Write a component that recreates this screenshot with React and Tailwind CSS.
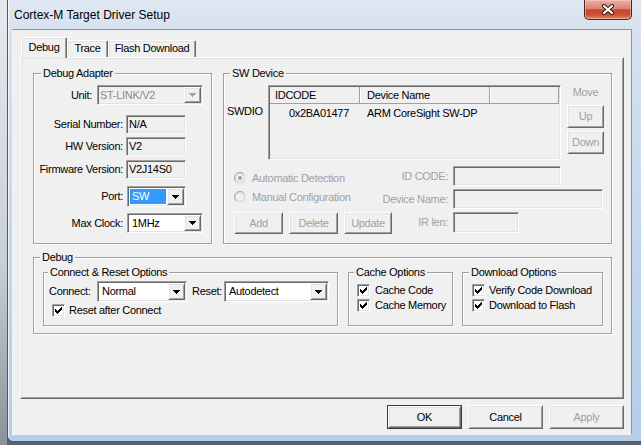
import React from "react";

const sunken =
  "border border-t-[#a0a0a0] border-l-[#a0a0a0] border-r-white border-b-white shadow-[inset_1px_1px_0_#696969,inset_-1px_-1px_0_#e3e3e3]";
const raised =
  "border border-t-white border-l-white border-r-[#696969] border-b-[#696969] shadow-[inset_1px_1px_0_#e3e3e3,inset_-1px_-1px_0_#a0a0a0]";
const GRAY = "text-[#a0a0a0]";

function Tri({ disabled }) {
  return (
    <svg width="7" height="4" viewBox="0 0 7 4">
      <path
        d="M0 0h7v1h-1v1h-1v1h-1v1h-1v-1h-1v-1h-1v-1h-1z"
        fill={disabled ? "#a0a0a0" : "#000"}
      />
    </svg>
  );
}

function ArrowBtn({ disabled }) {
  return (
    <div
      className={`w-[17px] h-full shrink-0 flex items-center justify-center bg-[#f0f0f0] ${raised}`}
    >
      <Tri disabled={disabled} />
    </div>
  );
}

function Combo({ className, value, disabled, selected, textPad }) {
  return (
    <div className={`flex p-[1px] ${sunken} ${disabled ? "bg-[#f0f0f0]" : "bg-white"} ${className}`}>
      <div className="flex-1 flex items-center min-w-0 p-[1px]">
        {selected ? (
          <div className="h-full w-full flex items-center bg-[#3399ff] text-white pl-[2px]">{value}</div>
        ) : (
          <span className={`${textPad} ${disabled ? "text-[#8a8a8a]" : ""}`}>{value}</span>
        )}
      </div>
      <ArrowBtn disabled={disabled} />
    </div>
  );
}

function Field({ className, value, bg }) {
  return (
    <div className={`flex items-center pl-[2px] ${sunken} ${bg || "bg-[#f0f0f0]"} ${className}`}>
      {value}
    </div>
  );
}

function Btn({ className, children, disabled, def }) {
  return (
    <div
      className={`flex items-center justify-center bg-[#f0f0f0] ${def ? "border border-[#3c3c3c] p-0" : ""} ${className}`}
    >
      <div
        className={`w-full h-full flex items-center justify-center ${raised} ${disabled ? GRAY : "text-black"}`}
      >
        {children}
      </div>
    </div>
  );
}

function Check() {
  return (
    <div
      className={`w-[13px] h-[13px] shrink-0 bg-white flex items-center justify-center ${sunken}`}
    >
      <svg width="7" height="7" viewBox="0 0 7 7">
        <path
          d="M0 2h1v3H0zM1 3h1v3H1zM2 4h1v3H2zM3 3h1v3H3zM4 2h1v3H4zM5 1h1v3H5zM6 0h1v3H6z"
          fill="#000"
        />
      </svg>
    </div>
  );
}

function Radio({ checked }) {
  return (
    <svg width="12" height="12" viewBox="0 0 12 12" className="shrink-0">
      <circle cx="6" cy="6" r="5.5" fill="#f0f0f0" stroke="#a0a0a0" />
      <path d="M9.89 2.11 A5.5 5.5 0 0 1 2.11 9.89" fill="none" stroke="#ffffff" />
      <circle cx="6" cy="6" r="4.5" fill="none" stroke="#d4d4d4" />
      {checked && <circle cx="6" cy="6" r="2" fill="#a0a0a0" />}
    </svg>
  );
}

function Group({ label, labelLeft, className, children }) {
  return (
    <div
      className={`relative border border-[#a0a0a0] shadow-[inset_1px_1px_0_#fff,1px_1px_0_#fff] ${className}`}
    >
      <span
        className={`absolute top-[-7px] ${labelLeft} px-[2px] bg-[#f0f0f0] leading-[13px] whitespace-nowrap`}
      >
        {label}
      </span>
      {children}
    </div>
  );
}

function Tab({ children, selected, className }) {
  return (
    <div
      className={`border-l border-t border-r border-l-white border-t-white border-r-[#696969] rounded-t-[2px] shadow-[inset_-1px_0_0_#a0a0a0,inset_1px_1px_0_#e3e3e3] text-center bg-[#f0f0f0] leading-[13px] ${
        selected ? "h-[21px] -mb-[1px] relative z-10 pt-[3px]" : "h-[17px] pt-[1px]"
      } ${className}`}
    >
      {children}
    </div>
  );
}

function RLabel({ children }) {
  return (
    <div className="w-[55px] flex justify-end">
      <span className="whitespace-nowrap shrink-0">{children}</span>
    </div>
  );
}

export default function App() {
  return (
    <div className="w-[641px] h-[445px] overflow-hidden flex bg-[#5b6168] font-['Liberation_Sans',Arial,sans-serif] text-[11px] leading-[13px] tracking-[-0.3px] text-black">
      {/* desktop strip */}
      <div className="w-[7px] h-full bg-[linear-gradient(180deg,#e6eaef_0%,#c9ced5_60%,#8c9299_100%)]" />
      {/* window */}
      <div className="flex-1 h-[442px] flex flex-col border-l border-b border-[#4c5a6a] rounded-bl-[6px] bg-[linear-gradient(180deg,#dfe8f2_0px,#d6e2ef_30px,#c5d8ee_220px,#b4cdea_100%)] shadow-[inset_1px_0_0_rgba(255,255,255,0.7)]">
        {/* title bar */}
        <div className="h-[29px] flex items-start shrink-0">
          <div className="pl-[6px] pt-[8px] text-[12px] leading-[15px] tracking-normal text-black">
            Cortex-M Target Driver Setup
          </div>
          <div className="ml-auto mr-[9px] w-[48px] h-[20px] rounded-b-[5px] border border-t-0 border-[#5a1f1a] bg-[linear-gradient(180deg,#eab0a3_0%,#dc8574_45%,#c74530_52%,#cd5238_78%,#e3895f_100%)] shadow-[inset_0_0_0_1px_rgba(255,220,210,0.45)] flex items-center justify-center">
            <svg width="14" height="11" viewBox="0 0 14 11">
              <path d="M3 2 L11 9 M11 2 L3 9" stroke="#3d1712" strokeWidth="4.2" strokeLinecap="round" />
              <path d="M3 2 L11 9 M11 2 L3 9" stroke="#ffffff" strokeWidth="2.2" strokeLinecap="round" />
            </svg>
          </div>
        </div>
        {/* client area */}
        <div className="ml-[4px] w-[620px] h-[406px] border border-t-[#8497ad] border-r-[#8497ad] border-l-[#eef3f8] border-b-[#eef3f8] bg-[#f0f0f0] flex flex-col shrink-0">
          {/* tabs */}
          <div className="mt-[7px] h-[20px] pl-[8px] flex items-end shrink-0">
            <Tab selected className="w-[46px]">Debug</Tab>
            <Tab className="w-[41px]">Trace</Tab>
            <Tab className="w-[88px]">Flash Download</Tab>
          </div>
          {/* panel */}
          <div className="ml-[7px] w-[604px] h-[342px] border border-t-white border-l-white border-r-[#696969] border-b-[#696969] shadow-[inset_1px_1px_0_#e3e3e3,inset_-1px_-1px_0_#a0a0a0] pl-[12px] pt-[15px] flex flex-col shrink-0">
            <div className="flex gap-[11px] h-[171px]">
              {/* Debug Adapter */}
              <Group label="Debug Adapter" labelLeft="left-[7px]" className="w-[179px] h-full flex flex-col">
                <div className="mt-[11px] h-[20px] flex items-center">
                  <span className="w-[58px] text-right">Unit:</span>
                  <Combo className="ml-[5px] w-[106px] h-[20px]" value="ST-LINK/V2" disabled textPad="pl-[0px]" />
                </div>
                <div className="mt-[10px] h-[19px] flex items-center">
                  <span className="w-[89px] text-right">Serial Number:</span>
                  <Field className="ml-[3px] w-[60px] h-[19px]" value="N/A" />
                </div>
                <div className="mt-[3px] h-[19px] flex items-center">
                  <span className="w-[89px] text-right">HW Version:</span>
                  <Field className="ml-[3px] w-[60px] h-[19px]" value="V2" />
                </div>
                <div className="mt-[4px] h-[19px] flex items-center">
                  <span className="w-[89px] text-right whitespace-nowrap">Firmware Version:</span>
                  <Field className="ml-[3px] w-[60px] h-[19px]" value="V2J14S0" />
                </div>
                <div className="mt-[7px] h-[21px] flex items-center">
                  <span className="w-[89px] text-right">Port:</span>
                  <Combo className="ml-[4px] w-[59px] h-[21px]" value="SW" selected />
                </div>
                <div className="mt-[6px] h-[20px] flex items-center">
                  <span className="w-[89px] text-right">Max Clock:</span>
                  <Combo className="ml-[4px] w-[76px] h-[20px]" value="1MHz" textPad="pl-[2px]" />
                </div>
              </Group>
              {/* SW Device */}
              <Group label="SW Device" labelLeft="left-[6px]" className="w-[389px] h-full flex flex-col">
                <div className="mt-[11px] h-[75px] flex">
                  <div className="w-[44px] pl-[3px] pt-[20px]">SWDIO</div>
                  <div className={`w-[293px] h-[75px] p-[1px] bg-[#f0f0f0] flex flex-col ${sunken}`}>
                    <div className="h-[17px] flex shrink-0">
                      <div className="w-[90px] h-full flex items-center pl-[5px] border-r border-b border-[#a0a0a0]">IDCODE</div>
                      <div className="w-[130px] h-full flex items-center pl-[7px] border-r border-b border-[#a0a0a0] shadow-[inset_1px_0_0_#fff]">Device Name</div>
                      <div className="flex-1 h-full border-r border-b border-[#a0a0a0] shadow-[inset_1px_0_0_#fff]" />
                    </div>
                    <div className="mt-[1px] h-[17px] flex items-center">
                      <div className="w-[90px] pl-[19px]">0x2BA01477</div>
                      <div className="pl-[7px] whitespace-nowrap">ARM CoreSight SW-DP</div>
                    </div>
                  </div>
                  <div className="ml-[6px] w-[37px] flex flex-col">
                    <div className={`text-center mt-[1px] ${GRAY}`}>Move</div>
                    <Btn className="mt-[6px] h-[23px]" disabled>Up</Btn>
                    <Btn className="mt-[3px] h-[23px]" disabled>Down</Btn>
                  </div>
                </div>
                <div className="mt-[6px] flex">
                  <div className="w-[169px] flex flex-col">
                    <div className={`mt-[5px] h-[14px] flex items-center pl-[10px] ${GRAY}`}>
                      <Radio checked />
                      <span className="ml-[6px] whitespace-nowrap">Automatic Detection</span>
                    </div>
                    <div className={`mt-[5px] h-[14px] flex items-center pl-[10px] ${GRAY}`}>
                      <Radio />
                      <span className="ml-[6px] whitespace-nowrap">Manual Configuration</span>
                    </div>
                    <div className="mt-[8px] h-[22px] flex pl-[10px] gap-[6px]">
                      <Btn className="w-[49px] h-[22px]" disabled>Add</Btn>
                      <Btn className="w-[49px] h-[22px]" disabled>Delete</Btn>
                      <Btn className="w-[48px] h-[22px]" disabled>Update</Btn>
                    </div>
                  </div>
                  <div className={`flex flex-col ${GRAY}`}>
                    <div className="h-[20px] flex items-center">
                      <RLabel>ID CODE:</RLabel>
                      <Field className="ml-[5px] w-[108px] h-[20px]" value="" />
                    </div>
                    <div className="mt-[3px] h-[20px] flex items-center">
                      <RLabel>Device Name:</RLabel>
                      <Field className="ml-[5px] w-[150px] h-[20px]" value="" />
                    </div>
                    <div className="mt-[3px] h-[21px] flex items-center">
                      <RLabel>IR len:</RLabel>
                      <Field className="ml-[5px] w-[66px] h-[21px]" value="" />
                    </div>
                  </div>
                </div>
              </Group>
            </div>
            {/* Debug */}
            <Group label="Debug" labelLeft="left-[6px]" className="mt-[13px] w-[579px] h-[77px]">
              <div className="mt-[14px] pl-[9px] flex">
                <Group label="Connect & Reset Options" labelLeft="left-[4px]" className="w-[295px] h-[54px] flex flex-col">
                  <div className="mt-[8px] h-[21px] flex items-center pl-[5px]">
                    <span className="w-[48px]">Connect:</span>
                    <Combo className="w-[90px] h-[21px]" value="Normal" textPad="pl-[2px]" />
                    <span className="ml-[5px] w-[32px]">Reset:</span>
                    <Combo className="w-[105px] h-[21px]" value="Autodetect" textPad="pl-[2px]" />
                  </div>
                  <div className="mt-[2px] h-[13px] flex items-center pl-[8px]">
                    <Check />
                    <span className="ml-[4px]">Reset after Connect</span>
                  </div>
                </Group>
                <Group label="Cache Options" labelLeft="left-[5px]" className="ml-[10px] w-[105px] h-[54px] flex flex-col">
                  <div className="mt-[11px] h-[13px] flex items-center pl-[8px]">
                    <Check />
                    <span className="ml-[5px]">Cache Code</span>
                  </div>
                  <div className="mt-[2px] h-[13px] flex items-center pl-[8px]">
                    <Check />
                    <span className="ml-[5px]">Cache Memory</span>
                  </div>
                </Group>
                <Group label="Download Options" labelLeft="left-[6px]" className="ml-[9px] w-[141px] h-[54px] flex flex-col">
                  <div className="mt-[11px] h-[13px] flex items-center pl-[9px]">
                    <Check />
                    <span className="ml-[4px] whitespace-nowrap">Verify Code Download</span>
                  </div>
                  <div className="mt-[2px] h-[13px] flex items-center pl-[9px]">
                    <Check />
                    <span className="ml-[4px] whitespace-nowrap">Download to Flash</span>
                  </div>
                </Group>
              </div>
            </Group>
          </div>
          {/* buttons */}
          <div className="mt-[6px] h-[24px] flex justify-end gap-[6px] w-[611px] shrink-0">
            <Btn className="w-[75px] h-[24px]" def>OK</Btn>
            <Btn className="w-[75px] h-[24px]">Cancel</Btn>
            <Btn className="w-[75px] h-[24px]" disabled>Apply</Btn>
          </div>
        </div>
      </div>
    </div>
  );
}
